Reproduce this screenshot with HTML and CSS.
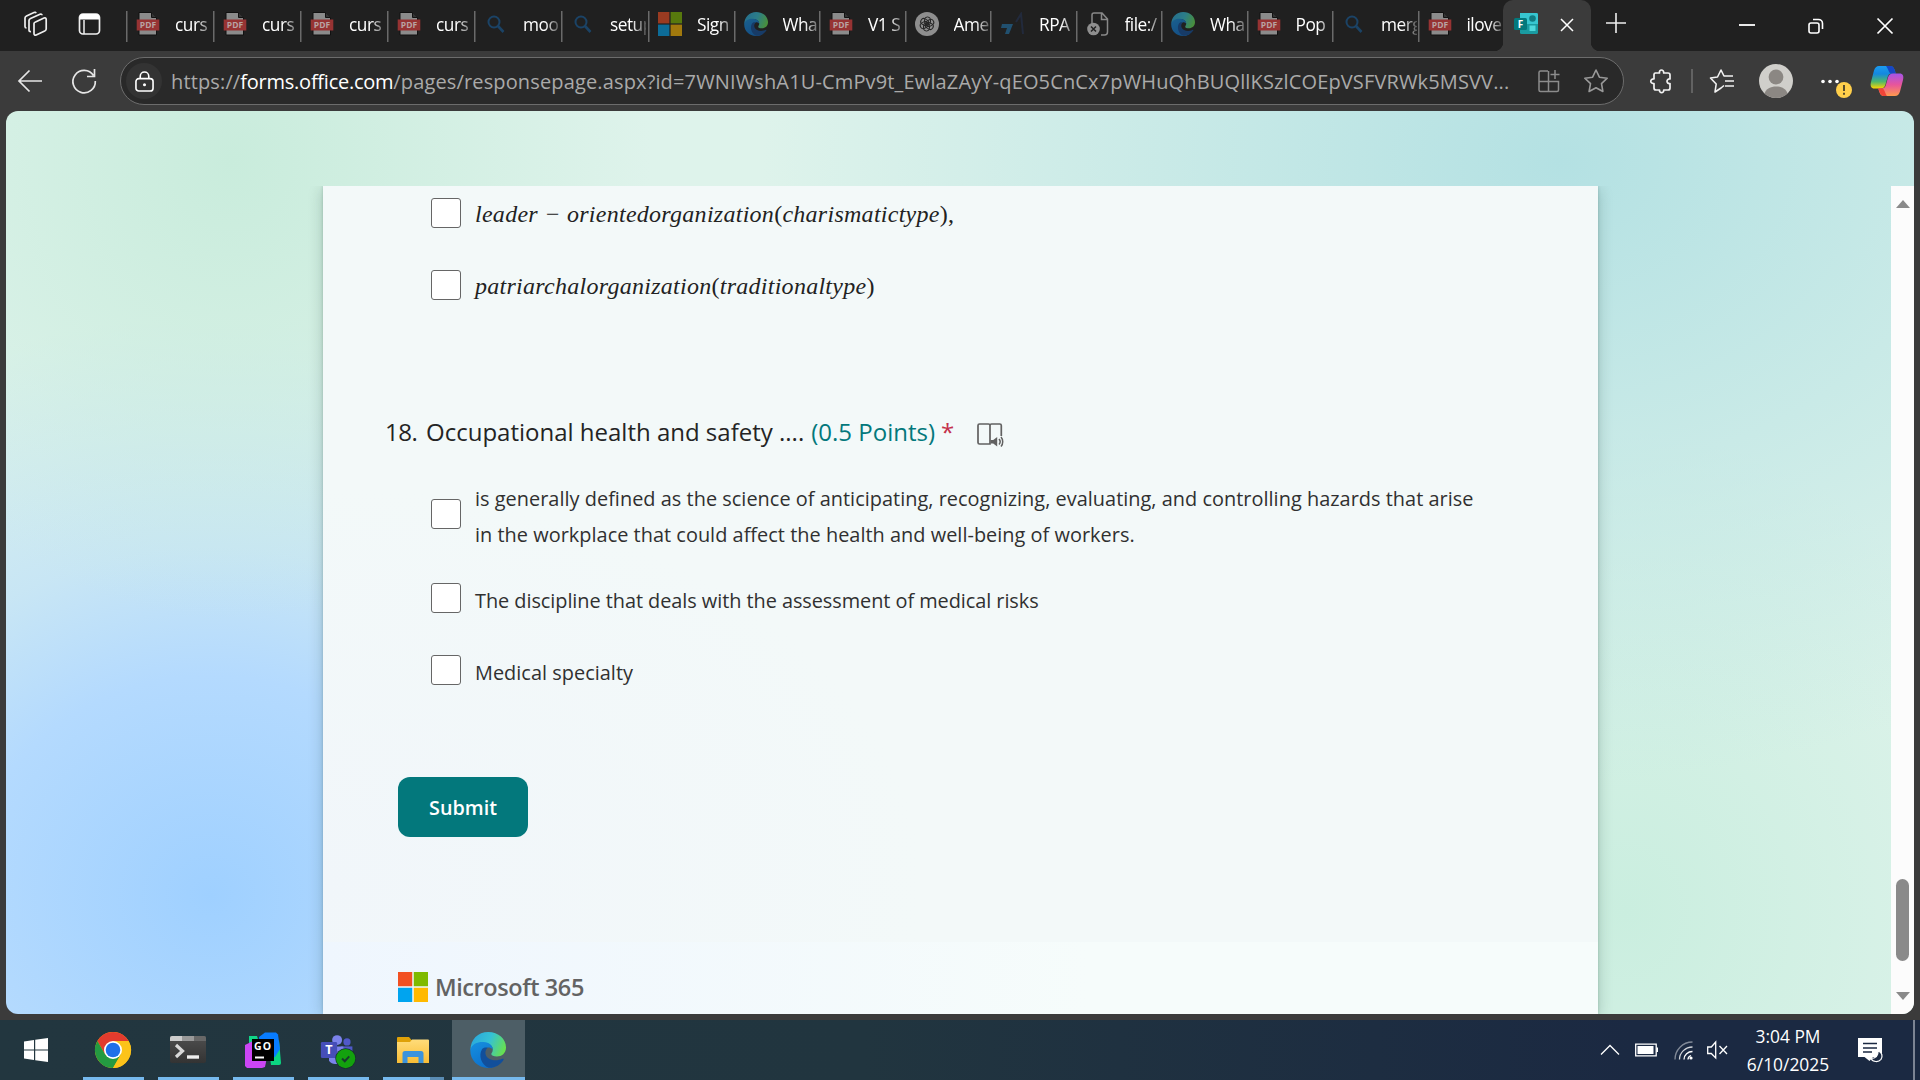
FILE: index.html
```html
<!DOCTYPE html>
<html lang="en">
<head>
<meta charset="utf-8">
<title>Forms</title>
<link rel="stylesheet" href="styles.css">
</head>
<body>
<svg class="defs" width="0" height="0" aria-hidden="true">
  <defs>
    <linearGradient id="edge-top" x1="0" y1="0.3" x2="1" y2="0.6"><stop offset="0" stop-color="#2aa7dc"/><stop offset=".5" stop-color="#35c1d5"/><stop offset="1" stop-color="#68e04e"/></linearGradient>
    <linearGradient id="edge-body" x1="0" y1="0" x2=".6" y2="1"><stop offset="0" stop-color="#1690df"/><stop offset="1" stop-color="#0c6fcc"/></linearGradient>
    <linearGradient id="folder" x1="0" y1="0" x2="0" y2="1"><stop offset="0" stop-color="#ffdc7a"/><stop offset="1" stop-color="#f9bd35"/></linearGradient>
    <linearGradient id="cp-left" x1="0" y1="0" x2="0" y2="1"><stop offset="0" stop-color="#1b9cf0"/><stop offset=".35" stop-color="#1488e0"/><stop offset=".7" stop-color="#4fb86a"/><stop offset="1" stop-color="#ffd500"/></linearGradient>
    <linearGradient id="cp-right" x1="0" y1="0" x2="0" y2="1"><stop offset="0" stop-color="#a554e8"/><stop offset=".5" stop-color="#e8559b"/><stop offset="1" stop-color="#ff9a4d"/></linearGradient>
    <linearGradient id="term" x1="0" y1="0" x2="0" y2="1"><stop offset="0" stop-color="#4f4f4f"/><stop offset="1" stop-color="#333"/></linearGradient>
    <symbol id="pdf" viewBox="0 0 24 24"><path d="M3 .5h12.500l5 5V23H3z" fill="#8b8b8b" stroke="#111"/><path d="M15.500.5v5h5" fill="#333" stroke="#111"/><path d="M.7 7.500h22.600v11H.7z" fill="#973333"/><text x="12" y="16.200" text-anchor="middle" font-size="8.500" font-weight="700" font-family="Open Sans, sans-serif" fill="#b9a3a3">PDF</text></symbol>
    <symbol id="search" viewBox="0 0 24 24"><circle cx="10" cy="10" r="5.500" fill="none" stroke="#1b4366" stroke-width="2"/><path d="m14 14 5.500 6" stroke="#1b4366" stroke-width="2.600"/></symbol>
    <symbol id="edge" viewBox="0 0 24 24"><path d="M.3 12C.3 5 5.300 0 12.200 0 19 0 24 4.700 24 10.300c0 3.800-2.800 6-6.100 6-2.200 0-3.700-.7-3.700-1.600 0-.7 1-1.300 1-3.100 0-2.300-2.300-4.300-5.400-4.300C5 7.300 1.800 9 .3 12z" fill="url(#edge-top)"/><path d="M.2 12C1.200 8 5 6.500 9 6.700c4 .2 6.200 2.500 6.200 4.800-1-.9-2.200-1.300-3.400-1.100-2.300.5-3.700 3.200-2.300 6.500 1.300 3.300 5 5.700 9.200 5-2 1.500-4.200 2.200-6.700 2.100C5 23.800 0 18.500.2 12z" fill="url(#edge-body)"/><path d="M8 11.500c-2.500 4-.5 10.500 4.500 12.300 4.300.2 7.700-2 9.800-5.200.3-.6-.1-1-.7-.7-4.600 2-9.600.8-11-2.400-.8-1.800-.2-3.800 1.100-5-1.500-.4-3 .1-3.700 1z" fill="#114f9b"/></symbol>
    <symbol id="ms" viewBox="0 0 24 24"><path d="M0 0h11.400v11.400H0z" fill="#f25022"/><path d="M12.600 0H24v11.400H12.600z" fill="#7fba00"/><path d="M0 12.600h11.400V24H0z" fill="#00a4ef"/><path d="M12.600 12.600H24V24H12.600z" fill="#ffb900"/></symbol>
    <symbol id="openai" viewBox="0 0 24 24"><circle cx="12" cy="12" r="12" fill="#8e8e8e"/><g fill="none" stroke="#262626" stroke-width="1"><rect x="9.500" y="5" width="6" height="8" rx="2.800"/><rect x="9.500" y="5" width="6" height="8" rx="2.800" transform="rotate(60 12 12)"/><rect x="9.500" y="5" width="6" height="8" rx="2.800" transform="rotate(120 12 12)"/><rect x="9.500" y="5" width="6" height="8" rx="2.800" transform="rotate(180 12 12)"/><rect x="9.500" y="5" width="6" height="8" rx="2.800" transform="rotate(240 12 12)"/><rect x="9.500" y="5" width="6" height="8" rx="2.800" transform="rotate(300 12 12)"/></g></symbol>
    <symbol id="rpa" viewBox="0 0 24 24"><path d="M2 12h11l-4 10H5l2-6H1z" fill="#21506f"/><path d="m16 10 5-8 2 20" fill="none" stroke="#222a3c" stroke-width="2"/></symbol>
    <symbol id="broken" viewBox="0 0 24 24"><path d="M6 12V3a2 2 0 0 1 2-2h8l5.500 6v13a3 3 0 0 1-3 3H15M15.500 1v6.500h6" fill="none" stroke="#888" stroke-width="1.500"/><circle cx="7.500" cy="17" r="6.300" fill="#8f8f8f"/><path d="m5 14.500 5 5m0-5-5 5" stroke="#222" stroke-width="1.500"/></symbol>
  </defs>
</svg>

<header class="tabbar">
  <div class="tabbar-tools">
    <svg class="i26" viewBox="0 0 26 26"><g fill="none" stroke="#eee" stroke-width="1.700" stroke-linejoin="round"><path d="M11 12.500v10c0 1.500 1 2 2.200 1.500l8.500-4c1-.5 1.500-1 1.500-2V8.500c0-1.500-1-2-2.200-1.500l-8.500 4c-1 .4-1.500 1-1.500 1.500z"/><path d="M8 20.500c-1.300.2-2-.3-2-1.500V9.500c0-1 .5-1.500 1.500-2L17 3.200c1-.4 2 0 2 1"/><path d="M3.500 17C2.500 17 2 16.400 2 15.500V7c0-1 .5-1.600 1.500-2.100L11 1.500c1-.4 1.800-.2 2 .7"/></g></svg>
    <svg class="i24" viewBox="0 0 24 24"><rect x="1.500" y="2" width="20" height="20" rx="3.500" fill="none" stroke="#eee" stroke-width="1.700"/><path d="M1.500 7.500V5.500A3.500 3.500 0 0 1 5 2h13a3.500 3.500 0 0 1 3.500 3.500v2z" fill="#fff"/><path d="M6 8v14" stroke="#eee" stroke-width="1.500"/></svg>
  </div>
  <nav class="tabs">
    <div class="tab wide"><svg class="fav"><use href="#pdf"/></svg><span>curs</span></div>
    <div class="tab wide"><svg class="fav"><use href="#pdf"/></svg><span>curs</span></div>
    <div class="tab wide"><svg class="fav"><use href="#pdf"/></svg><span>curs</span></div>
    <div class="tab wide"><svg class="fav"><use href="#pdf"/></svg><span>curs</span></div>
    <div class="tab wide"><svg class="fav"><use href="#search"/></svg><span>moo</span></div>
    <div class="tab wide"><svg class="fav"><use href="#search"/></svg><span>setup</span></div>
    <div class="tab"><svg class="fav dim"><use href="#ms"/></svg><span>Sign</span></div>
    <div class="tab"><svg class="fav dim"><use href="#edge"/></svg><span>Wha</span></div>
    <div class="tab"><svg class="fav"><use href="#pdf"/></svg><span>V1 S</span></div>
    <div class="tab"><svg class="fav"><use href="#openai"/></svg><span>Ame</span></div>
    <div class="tab"><svg class="fav"><use href="#rpa"/></svg><span>RPA</span></div>
    <div class="tab"><svg class="fav"><use href="#broken"/></svg><span>file:/</span></div>
    <div class="tab"><svg class="fav dim"><use href="#edge"/></svg><span>Wha</span></div>
    <div class="tab"><svg class="fav"><use href="#pdf"/></svg><span>Pop</span></div>
    <div class="tab"><svg class="fav"><use href="#search"/></svg><span>merg</span></div>
    <div class="tab"><svg class="fav"><use href="#pdf"/></svg><span>ilove</span></div>
    <div class="tab active">
      <svg class="fav" viewBox="0 0 24 24"><rect x="6" y="1" width="18" height="21" rx="1.500" fill="#1a9ba1"/><path d="M6 1h16.500A1.500 1.500 0 0 1 24 2.500V12H6z" fill="#37c6d0"/><circle cx="18.500" cy="6.500" r="3.300" fill="#107c82"/><rect x="15.500" y="13.500" width="6" height="5.500" fill="#4fd8dc"/><rect x="0" y="6" width="13" height="12" rx="1.500" fill="#03787c"/><text x="6.500" y="15.500" text-anchor="middle" font-size="10" font-weight="700" font-family="Open Sans, sans-serif" fill="#fff">F</text></svg>
      <svg class="tab-close" viewBox="0 0 14 14"><path d="m1 1 12 12M13 1 1 13" stroke="#fff" stroke-width="1.500"/></svg>
    </div>
  </nav>
  <svg class="newtab" viewBox="0 0 22 22"><path d="M11 1v20M1 11h20" stroke="#eee" stroke-width="1.600"/></svg>
  <div class="winbtns">
    <svg viewBox="0 0 16 16"><path d="M0 7h16" stroke="#fff" stroke-width="1.800"/></svg>
    <svg viewBox="0 0 16 16"><g fill="none" stroke="#fff" stroke-width="1.600"><rect x="1" y="5" width="10" height="10" rx="2"/><path d="M5 1.500h5.500a4 4 0 0 1 4 4V11"/></g></svg>
    <svg viewBox="0 0 16 16"><path d="m.5.5 15 15m0-15-15 15" stroke="#fff" stroke-width="1.700"/></svg>
  </div>
</header>

<div class="toolbar">
  <svg class="i26 back" viewBox="0 0 26 26"><path d="M25 13H2M12.500 2.500 2 13l10.500 10.500" fill="none" stroke="#e6e6e6" stroke-width="1.700"/></svg>
  <svg class="i26 reload" viewBox="0 0 26 26"><path d="M22.500 7.500A11.200 11.200 0 1 0 24.300 13M23.500 1v7.500H16" fill="none" stroke="#e6e6e6" stroke-width="1.700"/></svg>
  <div class="address">
    <span class="lock"><svg viewBox="0 0 20 22"><rect x="1" y="8" width="18" height="13" rx="3" fill="none" stroke="#fff" stroke-width="1.700"/><path d="M5.500 8V5.500a4.500 4.500 0 0 1 9 0V8" fill="none" stroke="#fff" stroke-width="1.700"/><circle cx="10" cy="14.500" r="1.600" fill="#fff"/></svg></span>
    <span class="url">https://<b>forms.office.com</b>/pages/responsepage.aspx?id=7WNIWshA1U-CmPv9t_EwlaZAyY-qEO5CnCx7pWHuQhBUQllKSzlCOEpVSFVRWk5MSVV...</span>
    <svg class="i24 a1" viewBox="0 0 24 24"><g fill="none" stroke="#8c8c8c" stroke-width="1.500"><path d="M11 2H3.500A1.500 1.500 0 0 0 2 3.500V21a1.500 1.500 0 0 0 1.500 1.500H20a1.500 1.500 0 0 0 1.500-1.500v-8.500H2M11.500 2v20.500M18 1v9m-4.500-4.500h9"/></g></svg>
    <svg class="i26 a2" viewBox="0 0 26 26"><path d="m13 2 3.400 7.200 7.800 1-5.700 5.400 1.400 7.900L13 19.700l-6.900 3.800 1.400-7.900-5.700-5.400 7.800-1z" fill="none" stroke="#999" stroke-width="1.600" stroke-linejoin="round"/></svg>
  </div>
  <svg class="i26 ext" viewBox="0 0 26 26"><path d="M6.500 5h5c-.8-4 4.600-4 4.200 0H20a2 2 0 0 1 2 2v4c-4-.6-4 5.200 0 4.500V20a2 2 0 0 1-2 2h-4.300c.4 3.600-4.600 3.600-4.200 0H8a2 2 0 0 1-2-2v-4.500c-4.300.5-4.300-5 0-4.500V6.500A1.500 1.500 0 0 1 7.500 5" fill="none" stroke="#f2f2f2" stroke-width="1.700" stroke-linejoin="round"/></svg>
  <i class="tsep"></i>
  <svg class="i26 favs" viewBox="0 0 26 26"><path d="M15 17.500 12 20l-6 4 1.200-8L1.500 10l7-1L12 2l3 6h9M16 13h9M16 18h9" fill="none" stroke="#f2f2f2" stroke-width="1.600" stroke-linejoin="round"/></svg>
  <svg class="avatar" viewBox="0 0 34 34"><circle cx="17" cy="17" r="17" fill="#d0cfcb"/><circle cx="17" cy="13" r="7.400" fill="#8b8783"/><path d="M5.500 29.500C8 20 26 20 28.500 29.500A17 17 0 0 1 5.500 29.500z" fill="#8b8783"/></svg>
  <svg class="more" viewBox="0 0 34 34"><g fill="#fff"><circle cx="3" cy="17.500" r="1.800"/><circle cx="10" cy="17.500" r="1.800"/><circle cx="17" cy="17.500" r="1.800"/></g><circle cx="24" cy="26" r="8.800" fill="#3b3b3b"/><circle cx="24" cy="26" r="8" fill="#ffcf4b"/><path d="M24 21v6M24 28.800v2" stroke="#222" stroke-width="1.500"/></svg>
  <svg class="copilot" viewBox="0 0 34 32"><path d="M9 1h11c3 0 4 2 5 5l.7 2.500h-4c-2.500 0-3.500 1.500-4.200 4l-2 7c-1 3-2.500 4-5 4H4.500C1 23.500 0 21 1 17L4 5.500C5 2.500 6.500 1 9 1z" fill="url(#cp-left)"/><path d="M16 1h4.500c3 0 4 2.500 5.200 7.500H21c-2 0-2.500-4.500-5-7.500z" fill="#1747c4"/><path d="M25 31H14c-3 0-4-2-5-5l-.7-2.500h3c3 0 4-1.500 4.700-4l2-7c1-3 2.500-4 5-4h6.500C33 8.500 34 11 33 15l-3 11.500c-1 3-2.500 4.500-5 4.500z" fill="url(#cp-right)"/><path d="M17 31h-3c-3 0-4-2.500-5.700-7.500H12c2.500 0 3 5 5 7.500z" fill="#ef4438"/></svg>
</div>

<div class="window">
  <div class="viewport">
    <main class="card">
      <div class="option"><i class="box"></i><span class="math">leader − orientedorganization<em>(</em>charismatictype<em>),</em></span></div>
      <div class="option"><i class="box"></i><span class="math">patriarchalorganization<em>(</em>traditionaltype<em>)</em></span></div>
      <h2 class="question"><span class="num">18.</span><span class="qtext">Occupational health and safety ....</span><span class="points">(0.5 Points)</span><span class="req">*</span>
        <svg class="reader" viewBox="0 0 28 26"><path d="M14 2v20H3.500A1.500 1.500 0 0 1 2 20.500v-17A1.500 1.500 0 0 1 3.500 2h9A1.500 1.500 0 0 1 14 3.500 1.500 1.500 0 0 1 15.500 2h8.300A1.500 1.500 0 0 1 25.300 3.500V14" fill="none" stroke="#616161" stroke-width="1.700"/><path d="M14.500 18h2.700l4-3v9.500l-4-3h-2.700z" fill="#616161"/><path d="M23 17c1.300 1.500 1.300 4 0 5.500M25 15c2.300 2.500 2.300 7 0 9.500" fill="none" stroke="#616161" stroke-width="1.500"/></svg>
      </h2>
      <div class="option tall"><i class="box"></i><p>is generally defined as the science of anticipating, recognizing, evaluating, and controlling hazards that arise<br>in the workplace that could affect the health and well-being of workers.</p></div>
      <div class="option"><i class="box"></i><p class="snug">The discipline that deals with the assessment of medical risks</p></div>
      <div class="option"><i class="box"></i><p>Medical specialty</p></div>
      <button class="submit">Submit</button>
      <footer class="brand"><svg viewBox="0 0 24 24"><use href="#ms"/></svg><span>Microsoft 365</span></footer>
    </main>
    <div class="scroll"><i class="up"></i><i class="thumb"></i><i class="down"></i></div>
  </div>
</div>

<footer class="taskbar">
  <div class="app start"><svg viewBox="0 0 24 24"><path d="M0 3.400 10 2v9.500H0zM11.200 1.800 24 0v11.500H11.200zM0 12.600h10V22L0 20.600zM11.200 12.600H24V24l-12.800-1.800z" fill="#fff"/></svg></div>
  <div class="app run"><svg viewBox="0 0 36 36"><circle cx="18" cy="18" r="18" fill="#fbbc05"/><path d="M2.400 9A18 18 0 0 1 33.600 9H18L10.200 22.500z" fill="#e33b2e"/><path d="M2.400 9A18 18 0 0 0 18 36l7.800-13.500H10.200z" fill="#249a41"/><path d="M33.600 9H18l7.800 13.500L18 36A18 18 0 0 0 33.600 9z" fill="#fcc31a"/><circle cx="18" cy="18" r="9" fill="#fff"/><circle cx="18" cy="18" r="7.300" fill="#1f6fe8"/></svg></div>
  <div class="app run"><svg viewBox="0 0 36 36"><rect y="4" width="36" height="27" rx="2" fill="url(#term)"/><path d="M0 9V6a2 2 0 0 1 2-2h10v5z" fill="#ccc"/><path d="M12 4h12v5H12z" fill="#999"/><path d="M24 4h10a2 2 0 0 1 2 2v3H24z" fill="#686868"/><path d="m6 13 6.500 6L6 25" fill="none" stroke="#d8d8d8" stroke-width="3.200"/><path d="M17 25h12" stroke="#eee" stroke-width="3.400"/></svg></div>
  <div class="app run"><svg viewBox="0 0 36 36"><path d="M4 4h8l3 10H4z" fill="#10d487"/><path d="m24 16 10-8 2 23a2 2 0 0 1-2 2h-8z" fill="#0bd681"/><path d="m14 5 6-4.500h11l2 2L35 17l-5 8H16z" fill="#087cff"/><path d="M0 13 8 9l14 16-2 10-3 1H2l-2-2z" fill="#cb45f5"/><path d="M7 7h22v22H7z" fill="#000"/><text x="9" y="17.500" font-size="10.500" font-weight="700" font-family="Open Sans, sans-serif" fill="#fff" textLength="17">GO</text><path d="M10 25.500h9" stroke="#fff" stroke-width="2"/></svg></div>
  <div class="app run"><svg viewBox="0 0 40 36"><circle cx="19" cy="7" r="5.500" fill="#7b83eb"/><circle cx="30" cy="9" r="4" fill="#5059c9"/><path d="M23 14h13v11H23z" fill="#5059c9"/><path d="M10 14h16v12a9 9 0 0 1-16 4z" fill="#7b83eb"/><rect x="1" y="9" width="18" height="18" rx="1.500" fill="#464eb8"/><text x="10" y="23" text-anchor="middle" font-size="14" font-weight="700" font-family="Open Sans, sans-serif" fill="#fff">T</text><circle cx="28.500" cy="27.500" r="11.500" fill="#16322c"/><circle cx="28.500" cy="27.500" r="10.700" fill="#13a10e"/><path d="m24.500 27.500 3 3 5-5.500" fill="none" stroke="#173b2c" stroke-width="2.200"/></svg></div>
  <div class="app run split"><svg viewBox="0 0 36 36"><path d="M2 6a1 1 0 0 1 1-1h11l2.500 3H20v4H2z" fill="#dfa108"/><path d="M2 10h13l2-2.500h16a1 1 0 0 1 1 1V31H2z" fill="url(#folder)"/><path d="M7.500 31V21.500A2.500 2.500 0 0 1 10 19h16a2.500 2.500 0 0 1 2.500 2.500V31h-5v-6h-11v6z" fill="#3b93dc"/></svg></div>
  <div class="app current"><svg viewBox="0 0 24 24"><use href="#edge"/></svg></div>
  <div class="tray">
    <svg class="chev" viewBox="0 0 18 18"><path d="m0 13.500 9-9 9 9" fill="none" stroke="#fff" stroke-width="1.300"/></svg>
    <svg class="bat" viewBox="0 0 24 18"><path d="M.7 3.200h20.500v11.600H.7z" fill="none" stroke="#fff" stroke-width="1.300"/><path d="M2.500 5h16v8h-16zM21.500 6.500H23v4.500h-1.500z" fill="#fff"/></svg>
    <svg class="wifi" viewBox="0 0 19 19"><g fill="none" stroke="#fff" stroke-width="1.300"><path d="M1 18.500C1 9 8.500 1 18.500 1" opacity=".45"/><path d="M5.500 18.500c0-7 6-12.500 13-12.500" opacity=".8"/><path d="M10 18.500c0-4.500 4-8 8.500-8"/><path d="M14 18.500c0-2 1.500-3.500 3-4"/></g><circle cx="17" cy="17" r="1.600" fill="#fff"/></svg>
    <svg class="vol" viewBox="0 0 21 18"><path d="M.7 6h3.600l4.400-5v16l-4.400-4.500H.7zM12.500 5l7.500 8m0-8-7.500 8" fill="none" stroke="#fff" stroke-width="1.300"/></svg>
    <div class="clock"><span>3:04 PM</span><span>6/10/2025</span></div>
    <svg class="notif" viewBox="0 0 26 26"><path d="M0 1h24v19H15l-3.500 4-5-4H0z" fill="#fff"/><path d="M5 6.500h14M5 11h14M5 15h9" stroke="#1b2942" stroke-width="1.300"/><path d="M20 14c.5 5-2.500 7.500-7 7.500 2 3.800 7.500 4 10 .8 1.800-2.500 1.500-7-3-8.300z" fill="#1b2942" stroke="#fff" stroke-width="1.200"/></svg>
    <i class="peek"></i>
  </div>
</footer>
</body>
</html>
```

FILE: styles.css
```css
* { box-sizing: border-box; }
body {
  margin: 0;
  width: 1920px;
  height: 1080px;
  overflow: hidden;
  display: flex;
  flex-direction: column;
  background: #3b3b3b;
  font-family: "Open Sans", "Noto Sans", sans-serif;
}
svg { display: block; flex: none; overflow: visible; }
.defs { position: absolute; }
.i24 { width: 24px; height: 24px; }
.i26 { width: 26px; height: 26px; }

/* Tab strip */
.tabbar { height: 51px; flex: none; display: flex; background: #202020; }
.tabbar-tools { width: 126px; flex: none; display: flex; align-items: center; gap: 29px; padding: 0 0 3px 23px; }
.tabs { display: flex; }
.tab {
  width: 85.500px;
  display: flex;
  align-items: center;
  padding: 0 0 3px 10px;
  overflow: hidden;
  background: linear-gradient(#6a6a6a, #6a6a6a) 0 11px / 1.500px 31px no-repeat;
}
.tab.wide { width: 87px; }
.tab span {
  margin: 1px 0 0 15px;
  width: 36px;
  overflow: hidden;
  white-space: nowrap;
  font-size: 17.300px;
  line-height: 26px;
  letter-spacing: -0.500px;
  color: #fff;
  mask-image: linear-gradient(90deg, #000 60%, transparent 112%);
}
.fav { width: 24px; height: 24px; }
.dim { opacity: .58; }
.tab.active {
  position: relative;
  width: 88px;
  overflow: visible;
  background: #3b3b3b;
  border-radius: 10px 10px 0 0;
  padding-left: 11px;
}
.tab.active::before, .tab.active::after {
  content: "";
  position: absolute;
  bottom: 0;
  width: 9px;
  height: 9px;
}
.tab.active::before { left: -9px; background: radial-gradient(circle at 0 0, transparent 9px, #3b3b3b 9.500px); }
.tab.active::after { right: -9px; background: radial-gradient(circle at 100% 0, transparent 9px, #3b3b3b 9.500px); }
.tab-close { width: 14px; height: 14px; margin-left: 22px; margin-top: 1px; }
.newtab { width: 22px; height: 22px; margin: 12px 0 0 14px; }
.winbtns { margin-left: auto; display: flex; gap: 53px; padding: 18px 27px 0 0; }
.winbtns svg { width: 16px; height: 16px; }

/* Address row */
.toolbar { height: 60px; flex: none; display: flex; align-items: center; padding-left: 17px; }
.reload { margin-left: 28px; }
.address {
  width: 1504px;
  height: 48px;
  margin-left: 23px;
  display: flex;
  align-items: center;
  border: 1.500px solid #6c6c6c;
  border-radius: 24px;
  background: #292929;
}
.lock { width: 36px; height: 36px; margin-left: 5px; border-radius: 50%; background: #333; display: grid; place-items: center; }
.lock svg { width: 19px; height: 21px; }
.url { width: 1375px; flex: none; padding-left: 9px; white-space: nowrap; font-size: 20px; letter-spacing: .142px; color: #aaa; }
.url b { font-weight: 400; letter-spacing: -.250px; color: #fff; }
.a2 { margin-left: 22px; }
.ext { margin-left: 24px; }
.tsep { width: 1.500px; height: 24px; margin-left: 17px; background: #626262; }
.favs { margin-left: 16px; }
.avatar { width: 34px; height: 34px; margin-left: 24px; }
.more { width: 34px; height: 34px; margin-left: 27px; }
.copilot { width: 34px; height: 32px; margin-left: 16px; }

/* Page */
.window {
  height: 903px;
  flex: none;
  margin: 0 6px;
  padding-top: 75px;
  border-radius: 12px;
  overflow: hidden;
  background:
    radial-gradient(ellipse 420px 460px at 225px 50px, #c9ecdc, #c9ecdc00),
    radial-gradient(ellipse 800px 620px at 1555px 50px, #b4e1e3, #b4e1e300),
    radial-gradient(ellipse 640px 580px at 205px 785px, #9fd0ff, #b4dafe 38%, #b9ddfb99 60%, #c4e4f600),
    radial-gradient(ellipse 420px 480px at 1620px 800px, #caeedf, #caeedf00),
    #def3eb;
}
.viewport { height: 828px; display: flex; overflow: hidden; }
.card {
  width: 1275px;
  height: 828px;
  flex: none;
  margin-left: 317px;
  padding-top: 10px;
  background: radial-gradient(ellipse 600px 400px at 0 700px, #f1f6fa, #f3f9f900), #f3f9f9;
  box-shadow: 0 3px 14px rgba(0, 40, 30, .22), 0 0 3px rgba(0, 40, 30, .18);
}
.option {
  display: flex;
  align-items: center;
  margin: 0 0 36px 108px;
  font-size: 19.900px;
  line-height: 36px;
  letter-spacing: .030px;
  color: #303030;
}
.option.tall { margin-bottom: 30px; }
.option p { margin: 0; padding-top: 2px; margin-bottom: -2px; white-space: nowrap; }
.option .snug { letter-spacing: -.050px; }
.box {
  width: 30px;
  height: 30px;
  flex: none;
  margin: 0 14px 3px 0;
  border: 1.500px solid #666;
  border-radius: 3px;
  background: #fff;
}
.math { font: italic 24px/36px "Liberation Serif", serif; letter-spacing: .270px; white-space: nowrap; color: #222; }
.math em { font-style: normal; }
.question {
  display: flex;
  align-items: center;
  height: 36px;
  margin: 110px 0 29px 62px;
  font-size: 24px;
  font-weight: 400;
  line-height: 36px;
  white-space: nowrap;
  color: #242424;
}
.num { width: 32px; letter-spacing: -.500px; }
.qtext { margin-left: 9px; }
.points { margin-left: 7px; color: #03787c; }
.req { margin-left: 6px; color: #c4314b; }
.reader { width: 28px; height: 26px; margin: 6px 0 0 22px; }
.submit {
  display: block;
  width: 130px;
  height: 60px;
  margin: 88px 0 105px 75px;
  padding: 1px 0 0;
  border: 0;
  border-radius: 12px;
  background: #03787c;
  color: #fff;
  font: 600 19.800px/59px "Open Sans", sans-serif;
}
.brand {
  height: 72px;
  display: flex;
  align-items: center;
  gap: 7px;
  padding: 18px 0 0 75px;
  background: linear-gradient(90deg, #eff6fe, #f6fcfb 60%);
  color: #636363;
  font-size: 23.500px;
  font-weight: 600;
  line-height: 30px;
  letter-spacing: -.420px;
}
.brand svg { width: 30px; height: 30px; }
.scroll { width: 23px; margin-left: auto; display: flex; flex-direction: column; align-items: center; background: #fcfcfc; }
.up, .down { border: 7px solid transparent; }
.up { margin-top: 7px; border-bottom: 8px solid #8a8a8a; }
.thumb { width: 13px; height: 82px; margin-top: 671px; border-radius: 7px; background: #8a8a8a; }
.down { margin-top: 31px; border-top: 8px solid #8a8a8a; }

/* Taskbar */
.taskbar {
  height: 60px;
  flex: none;
  margin-top: 6px;
  display: flex;
  background: linear-gradient(90deg, #22363f, #21353f 45%, #1b2942 85%, #1b2942);
}
.app { width: 61px; margin-right: 14px; display: grid; place-items: center; }
.app svg { width: 36px; height: 36px; margin-right: 1px; }
.app.start { width: 72px; margin-right: 11px; }
.start svg { width: 24px; height: 24px; margin: 0; }
.run { background: linear-gradient(#76b9ed, #76b9ed) bottom / 100% 3px no-repeat; }
.split { background: linear-gradient(90deg, #76b9ed 77%, #5a8cb4 77%) bottom / 100% 3px no-repeat; margin-right: 8px; }
.current { width: 73px; background: linear-gradient(#76b9ed, #76b9ed) bottom / 100% 3px no-repeat, #4d5e66; }
.tray { margin-left: auto; display: flex; align-items: center; }
.chev { width: 18px; height: 18px; }
.bat { width: 24px; height: 18px; margin-left: 16px; }
.wifi { width: 19px; height: 19px; margin-left: 15px; }
.vol { width: 21px; height: 18px; margin-left: 14px; }
.clock {
  width: 100px;
  margin-left: 10px;
  display: flex;
  flex-direction: column;
  align-items: center;
  font-size: 17.400px;
  line-height: 28px;
  color: #fff;
}
.notif { width: 26px; height: 26px; margin-left: 20px; }
.peek { width: 2px; height: 60px; margin: 0 5px 0 29px; background: #7b8494; }
```
